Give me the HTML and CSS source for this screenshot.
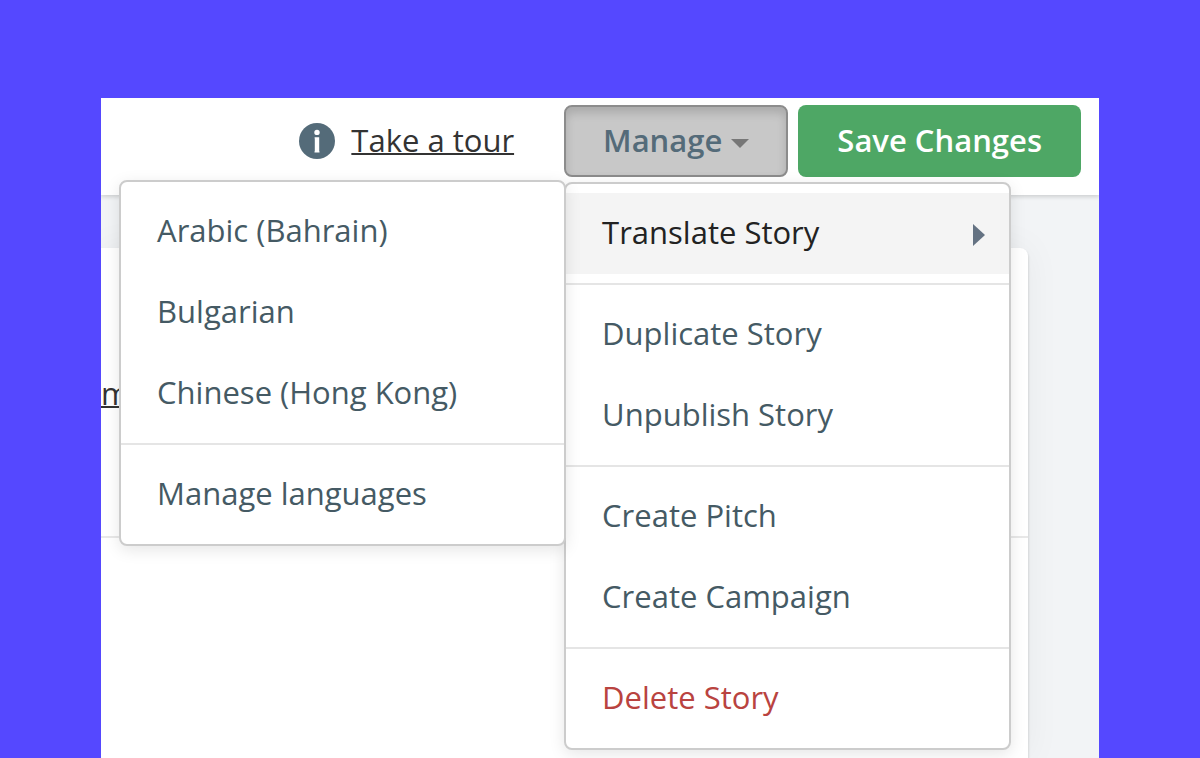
FILE: index.html
```html
<!DOCTYPE html>
<html lang="en">
<head>
    <meta charset="UTF-8">
    <meta name="viewport" content="width=device-width, initial-scale=1.0">
    <title>Story</title>
    <link rel="stylesheet" href="styles.css">
</head>
<body>
    <div class="app">
        <header class="toolbar">
            <a href="#" class="tour">
                <svg class="tour-icon" viewBox="0 0 36 36" aria-hidden="true">
                    <circle cx="18" cy="18" r="18" fill="#546b79"/>
                    <circle cx="18" cy="9.400" r="2.700" fill="#fff"/>
                    <path d="M15.600 14.200h4.600v13.500q0 .5 .3 .8v1h-5v-1q.3-.3 .3-.8v-11.500q0-.8-.2-1z" fill="#fff"/>
                </svg>
                <span class="tour-text">Take a tour</span>
            </a>
            <div class="dropdown">
                <button type="button" class="button manage-button" aria-expanded="true">Manage <span class="caret"></span></button>
                <ul class="menu">
                    <li class="has-submenu">
                        <a href="#" class="menu-item active">Translate Story <span class="arrow"></span></a>
                        <ul class="menu submenu">
                            <li><a href="#" class="menu-item">Arabic (Bahrain)</a></li>
                            <li><a href="#" class="menu-item">Bulgarian</a></li>
                            <li><a href="#" class="menu-item">Chinese (Hong Kong)</a></li>
                            <li class="divider"></li>
                            <li><a href="#" class="menu-item">Manage languages</a></li>
                        </ul>
                    </li>
                    <li class="divider"></li>
                    <li><a href="#" class="menu-item">Duplicate Story</a></li>
                    <li><a href="#" class="menu-item">Unpublish Story</a></li>
                    <li class="divider"></li>
                    <li><a href="#" class="menu-item">Create Pitch</a></li>
                    <li><a href="#" class="menu-item">Create Campaign</a></li>
                    <li class="divider"></li>
                    <li><a href="#" class="menu-item danger">Delete Story</a></li>
                </ul>
            </div>
            <button type="button" class="button save-button">Save Changes</button>
        </header>
        <main class="content">
            <section class="card">
                <div class="card-top"><a href="#" class="card-link">m</a></div>
            </section>
        </main>
    </div>
</body>
</html>
```

FILE: styles.css
```css
* {
  box-sizing: border-box;
}
body {
  margin: 0;
  height: 100vh;
  padding: 98px 101px 0;
  background-color: #5548ff;
  font-family: "Open Sans", "Noto Sans", sans-serif;
  font-size: 31px;
  color: #333;
}
.app {
  height: 100%;
  display: flex;
  flex-direction: column;
  overflow: hidden;
  background-color: #f2f4f6;
}
.toolbar {
  position: relative;
  z-index: 1;
  display: flex;
  align-items: center;
  justify-content: flex-end;
  padding: 7px 18px 18px;
  background-color: white;
  box-shadow: 0 2px 4px rgba(0, 0, 0, 0.15);
}
.tour {
  display: flex;
  align-items: center;
  gap: 16px;
  margin-right: 50px;
  color: #333;
  text-decoration: none;
}
.tour-icon {
  width: 36px;
  height: 36px;
}
.tour-text {
  padding-bottom: 2px;
  text-decoration: underline;
  text-decoration-thickness: 2px;
}
.button {
  height: 72px;
  padding: 0 37px 2px;
  border: 2px solid transparent;
  border-radius: 8px;
  font-family: inherit;
  font-size: 31px;
  font-weight: 600;
  cursor: pointer;
}
.dropdown {
  position: relative;
  margin-right: 10px;
}
.manage-button {
  display: flex;
  align-items: center;
  gap: 9px;
  border-color: #8c8c8c;
  background-color: #c8c8c8;
  box-shadow: inset 0 6px 10px rgba(0, 0, 0, 0.15);
  color: #546b79;
}
.caret {
  margin-top: 6px;
  border-top: 9px solid #777;
  border-left: 9px solid transparent;
  border-right: 9px solid transparent;
}
.save-button {
  background-color: #4ea765;
  color: white;
}
.menu {
  position: absolute;
  top: calc(100% + 5px);
  left: 0;
  width: 447px;
  margin: 0;
  padding: 9px 0;
  list-style: none;
  background-color: white;
  border: 2px solid #ccc;
  border-radius: 8px;
  box-shadow: 0 4px 16px rgba(0, 0, 0, 0.1);
}
.has-submenu {
  position: relative;
}
.submenu {
  top: -13px;
  left: auto;
  right: 100%;
}
.menu-item {
  display: flex;
  align-items: center;
  justify-content: space-between;
  height: 81px;
  padding: 0 24px 4px 36px;
  color: #455a64;
  text-decoration: none;
}
.menu-item.active {
  background-color: #f4f4f4;
  color: #222;
}
.menu-item.danger {
  color: #b94340;
}
.arrow {
  margin-top: 6px;
  border-left: 12px solid #647282;
  border-top: 11px solid transparent;
  border-bottom: 11px solid transparent;
}
.divider {
  height: 2px;
  margin: 9px 0;
  background-color: #e5e5e5;
}
.content {
  flex: 1;
  padding: 53px 71px 0 0;
}
.card {
  height: 100%;
  background-color: white;
  border-top-right-radius: 8px;
  box-shadow: 0 2px 3px rgba(0, 0, 0, 0.2), 0 0 36px rgba(0, 0, 0, 0.05);
}
.card-top {
  height: 290px;
  padding-top: 124px;
  border-bottom: 2px solid #e8e8e8;
}
.card-link {
  color: #333;
  font-size: 31px;
  text-decoration-thickness: 2px;
}
```
